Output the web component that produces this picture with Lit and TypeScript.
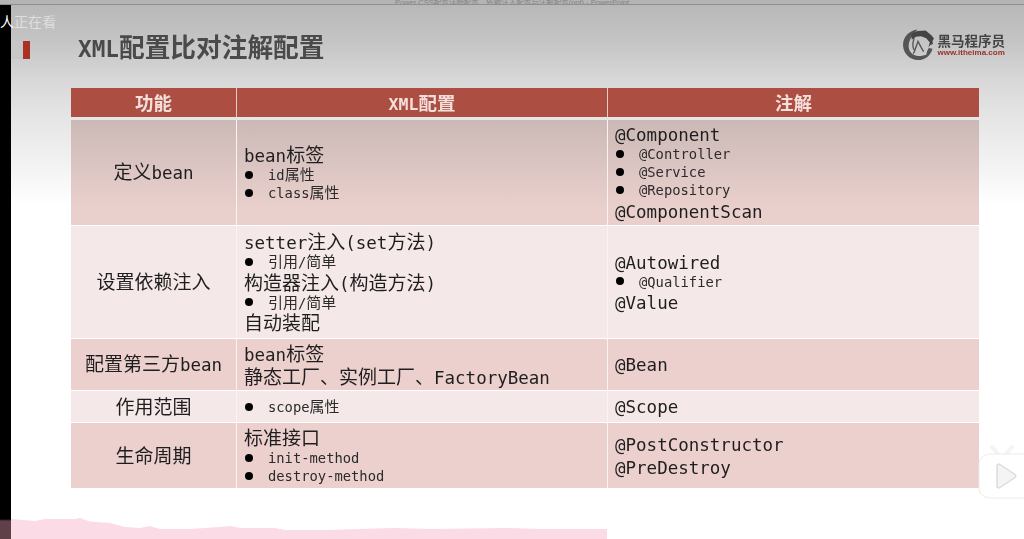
import { LitElement, html, css, svg } from "lit";
import { customElement } from "lit/decorators.js";

// Splits a line into Latin (mono) and CJK runs, which have different sizes in the reference.
function runs(t: string) {
  return t.split(/([\x20-\x7e]+)/).filter(Boolean).map((s) =>
    /^[\x20-\x7e]+$/.test(s) ? html`<span class="a">${s}</span>` : html`<span class="c">${s}</span>`
  );
}
type Line = { t: string; b?: boolean };
const L = (t: string): Line => ({ t });
const B = (t: string): Line => ({ t, b: true });

const rows: { cls: string; name: string; mid: Line[]; right: Line[] }[] = [
  {
    cls: "r1", name: "定义bean",
    mid: [L("bean标签"), B("id属性"), B("class属性")],
    right: [L("@Component"), B("@Controller"), B("@Service"), B("@Repository"), L("@ComponentScan")],
  },
  {
    cls: "r2", name: "设置依赖注入",
    mid: [L("setter注入(set方法)"), B("引用/简单"), L("构造器注入(构造方法)"), B("引用/简单"), L("自动装配")],
    right: [L("@Autowired"), B("@Qualifier"), L("@Value")],
  },
  {
    cls: "r3", name: "配置第三方bean",
    mid: [L("bean标签"), L("静态工厂、实例工厂、FactoryBean")],
    right: [L("@Bean")],
  },
  { cls: "r4", name: "作用范围", mid: [B("scope属性")], right: [L("@Scope")] },
  {
    cls: "r5", name: "生命周期",
    mid: [L("标准接口"), B("init-method"), B("destroy-method")],
    right: [L("@PostConstructor"), L("@PreDestroy")],
  },
];

const logoMark = svg`
  <svg class="mark" viewBox="0 0 32 32" aria-hidden="true">
    <path d="M15 1.500C7 2.500 1 8.500 1 16.500c0 8 6.500 14.500 14.500 14.500 7 0 12.500-4.500 14-11l-3.500-.5-1.500 2.500-1 4-4 1c-5 1-10-1-12-5-2-4.500-1-10 3-15z" fill="#555"/>
    <path d="M9 5.500 15 3l8-.5 6 5 2 3-1.500 2 .5 3-2.500 1-2 2.500 1.500-5-3.500-4-5-2-5 .5-4 3z" fill="#444"/>
    <path d="M11 25c2-4 3-8 4.500-12 1.500 3 3 6 5.500 10M12 10c-1.500 3-2 7-.5 11" fill="none" stroke="#555" stroke-width="1.300"/>
  </svg>`;

const tvIcon = svg`
  <svg class="tv" viewBox="0 0 48 58" aria-hidden="true">
    <path d="M14 4 21 12M34 4 27 12" stroke="#f6f3f3" stroke-width="4" stroke-linecap="round"/>
    <path d="M13 11H48V55H13C6 55 1 51 1 45V21C1 15 6 11 13 11Z" fill="#fff" stroke="#efeaea"/>
    <path d="M19 23c0-1.500 1.500-2.500 3-1.500l15 10c1 1 1 2 0 3l-15 10c-1.500 1-3 0-3-1.500z" fill="#f4f4f4" stroke="#dcdcdc" stroke-width="1.500"/>
  </svg>`;

@customElement("app-root")
export class AppRoot extends LitElement {
  static styles = css`
    :host { display: block; width: 1024px; height: 539px; overflow: hidden; position: relative; background: #fff; }
    .page { display: flex; height: 539px; }
    .black { width: 11px; margin-top: 5px; background: linear-gradient(#000 514px, #5f3f48 516px); flex: none; }
    .slide {
      flex: 1; display: flex; flex-direction: column; position: relative;
      font-family: "Noto Sans CJK SC", "DejaVu Sans Mono", sans-serif;
      color: #1e1e1e; filter: blur(0.45px);
      background: linear-gradient(#b8b8b8 5px, #c4c4c4 40px, #d8d8d8 80px, #e6e6e6 120px, #f4f4f4 170px, #fff 205px);
    }
    .a, .c { display: inline-block; line-height: inherit; vertical-align: baseline; }
    .a { font-family: "DejaVu Sans Mono", monospace; }
    .c { font-family: "Noto Sans CJK SC", sans-serif; }

    .head { height: 88px; flex: none; display: flex; align-items: flex-start; padding-right: 19px; }
    .marker { width: 7px; height: 18px; margin-top: 41px; background: #a93222; border-left: 12px solid #c7c7c7; flex: none; }
    .title { margin: 28px 0 0 48px; font-weight: 700; color: #4a4a4a; line-height: 36px; font-size: 25.700px; white-space: nowrap; }
    .title .a { font-size: 22.700px; }
    .title .c { font-size: 25.700px; }
    .logo { margin: 28px 0 0 auto; display: flex; gap: 3px; align-items: center; }
    .mark { width: 33px; height: 33px; }
    .logo-text { display: flex; flex-direction: column; }
    .logo-cn { font: 700 13.500px/16px "Noto Sans CJK SC", sans-serif; color: #444; white-space: nowrap; }
    .logo-url { font: 700 8px/10px "Liberation Sans", sans-serif; color: #9c2f2a; white-space: nowrap; }

    .table {
      margin-left: 60px; width: 908px;
      display: grid; grid-template-columns: 166px 371px 371px;
      grid-template-rows: 31px 105px 112px 51px 31px 65px;
      row-gap: 1px;
    }
    .h {
      background: #ac4e42; color: #f3dfdb; font-weight: 700; display: flex; align-items: baseline; justify-content: center;
      border-right: 1px solid #e3cdc9; margin-bottom: 2px; line-height: 29px; font-size: 18.500px;
    }
    .h .c { font-size: 18.500px; }
    .h .a { font-size: 16.500px; }
    .h.end { border-right: 0; }
    .cell {
      display: flex; flex-direction: column; justify-content: center; padding-left: 7px;
      border-right: 1px solid #fbf3f3; min-width: 0;
    }
    .cell.last { border-right: 0; padding-bottom: 2px; }
    .cell.name { align-items: center; padding-left: 0; padding-bottom: 2px; }
    .r1 { background: linear-gradient(#cbb9b6, #ead0cd 85%); }
    .r2, .r4 { background: #f5e8e8; }
    .r3, .r5 { background: #ebd0ce; }
    .line { white-space: nowrap; color: #1e1e1e; font-size: 19px; line-height: 22.500px; height: 22.500px; }
    .line .a { font-size: 17.500px; }
    .line .c { font-size: 19px; }
    .bul { display: flex; align-items: center; height: 18px; line-height: 18px; font-size: 15px; white-space: nowrap; color: #2b2b2b; }
    .bul .a { font-size: 13.800px; }
    .bul .c { font-size: 15px; }
    .dot { width: 8px; height: 8px; border-radius: 50%; background: #000; margin: 0 15px 0 1px; flex: none; }
    .name-t { line-height: 24px; font-size: 19px; white-space: nowrap; }
    .name-t .a { font-size: 17.500px; }
    .name-t .c { font-size: 19px; }

    .foot { flex: 1; position: relative; }
    .wave { position: absolute; left: 0; bottom: 0; width: 596px; height: 24px; display: block; }

    .top { position: absolute; top: 0; left: 0; right: 0; height: 5px; background: #b4b4b4; overflow: hidden; text-align: center;
      font: 7.500px/5px "Liberation Sans", "Noto Sans CJK SC", sans-serif; color: #858585; border-bottom: 1px solid #8f8f8f; box-sizing: border-box; }
    .watch { position: absolute; left: 0; top: 11px; font: 14px/20px "Noto Sans CJK SC", sans-serif; color: rgba(255,255,255,.5); white-space: nowrap; }
    .watch b { font-weight: 400; color: #fff; }
    .tv { position: absolute; right: -2px; top: 443px; width: 48px; height: 58px; overflow: visible; }
  `;

  private line(l: Line) {
    return l.b
      ? html`<div class="bul"><i class="dot"></i><span>${runs(l.t)}</span></div>`
      : html`<div class="line">${runs(l.t)}</div>`;
  }

  render() {
    return html`
      <div class="page">
        <div class="black"></div>
        <div class="slide">
          <div class="head">
            <div class="marker"></div>
            <div class="title">${runs("XML配置比对注解配置")}</div>
            <div class="logo">
              ${logoMark}
              <div class="logo-text">
                <div class="logo-cn">黑马程序员</div>
                <div class="logo-url">www.itheima.com</div>
              </div>
            </div>
          </div>
          <div class="table">
            <div class="h">${runs("功能")}</div>
            <div class="h">${runs("XML配置")}</div>
            <div class="h end">${runs("注解")}</div>
            ${rows.map((r) => html`
              <div class="cell name ${r.cls}"><div class="name-t">${runs(r.name)}</div></div>
              <div class="cell mid ${r.cls}">${r.mid.map((l) => this.line(l))}</div>
              <div class="cell last ${r.cls}">${r.right.map((l) => this.line(l))}</div>
            `)}
          </div>
          <div class="foot">
            <svg class="wave" viewBox="0 0 596 24" preserveAspectRatio="none" aria-hidden="true">
              <path d="M0 4 24 6 34 4 64 4 69 3 79 6.500 99 8 114 12 129 13 139 11 149 14 179 14 209 12 219 11 229 13 264 13 274 15 316 15 382 13 420 14 496 13 530 14 596 14V24H0Z" fill="#fbdbe6"/>
            </svg>
          </div>
        </div>
      </div>
      <div class="top">Power CSS配置详细配置、依赖注入配置与注解配置(ppt) - PowerPoint</div>
      <div class="watch"><b>人</b>正在看</div>
      ${tvIcon}
    `;
  }
}
